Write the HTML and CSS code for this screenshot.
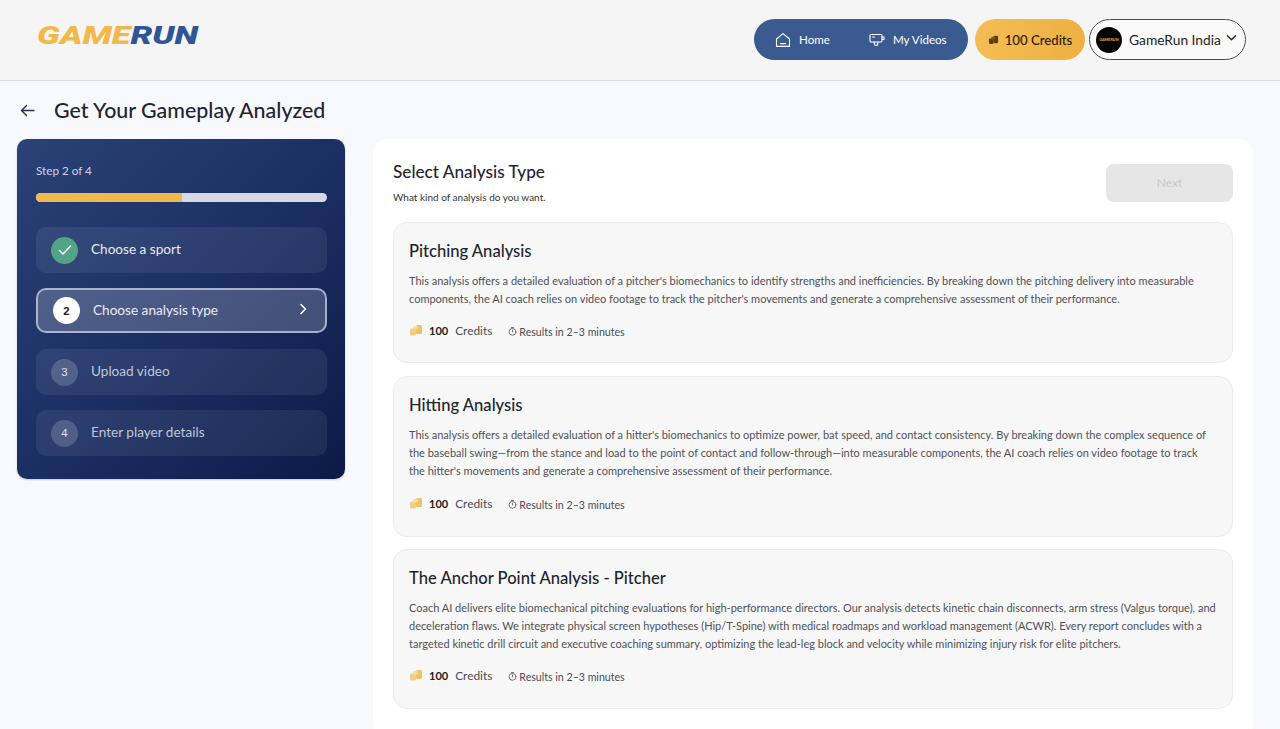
FILE: index.html
```html
<!DOCTYPE html>
<html lang="en">
<head>
<meta charset="utf-8">
<title>GameRun</title>
<link rel="stylesheet" href="styles.css">
</head>
<body>
<header class="topbar">
  <div class="logo"><span class="logo-gold">GAME</span><span class="logo-blue">RUN</span></div>
  <nav class="top-actions">
    <div class="nav-pill">
      <a class="nav-link nav-home">
        <svg class="nav-icon" viewBox="0 0 16 16" fill="none" stroke="#fff" stroke-width="1.1" stroke-linejoin="round" stroke-linecap="round"><path d="M1.5 7 8 1.6 14.5 7v7.4h-13z"/><path d="M5.5 11.6h5"/></svg>
        <span>Home</span>
      </a>
      <a class="nav-link">
        <svg class="nav-icon" viewBox="0 0 16 16" fill="none" stroke="#fff" stroke-width="1.1" stroke-linejoin="round" stroke-linecap="round"><rect x="1" y="2.5" width="12" height="7.5" rx="1.2"/><path d="M13 5h2v2.5h-2M5 10l.8 3.2h2.6L9 10M3.5 5h2"/></svg>
        <span>My Videos</span>
      </a>
    </div>
    <div class="credits-pill">
      <svg class="coin-small" viewBox="0 0 12 12" fill="#5a3d08"><rect x="1" y="5" width="5" height="6" rx="1.4"/><rect x="6" y="2" width="5" height="8" rx="1.4"/><rect x="3.5" y="3" width="4" height="3" rx="1.2" fill="#7c5a14"/></svg>
      <span>100 Credits</span>
    </div>
    <div class="profile-pill">
      <div class="avatar"><span>GAMERUN</span></div>
      <span class="profile-name">GameRun India</span>
      <svg class="chevron" viewBox="0 0 12 8" fill="none" stroke="#222" stroke-width="1.5" stroke-linecap="round" stroke-linejoin="round"><path d="M1.5 1.5 6 6l4.5-4.5"/></svg>
    </div>
  </nav>
</header>

<div class="title-row">
  <svg class="back" viewBox="0 0 16 14" fill="none" stroke="#27304a" stroke-width="1.5" stroke-linecap="round" stroke-linejoin="round"><path d="M15 7H1.5M7 1.5 1.5 7 7 12.5"/></svg>
  <h1>Get Your Gameplay Analyzed</h1>
</div>

<div class="layout">
  <aside class="stepper">
    <div class="step-label">Step 2 of 4</div>
    <div class="progress"><div class="progress-fill"></div></div>
    <ul class="steps">
      <li class="step">
        <span class="badge badge-done"><svg viewBox="0 0 14 12" fill="none" stroke="#fff" stroke-width="1.5" stroke-linecap="round" stroke-linejoin="round"><path d="M1.5 6.5 5 10l7.5-8"/></svg></span>
        <span class="step-text">Choose a sport</span>
      </li>
      <li class="step step-active">
        <span class="badge badge-active">2</span>
        <span class="step-text">Choose analysis type</span>
        <svg class="step-arrow" viewBox="0 0 8 12" fill="none" stroke="#fff" stroke-width="1.6" stroke-linecap="round" stroke-linejoin="round"><path d="M2 1.5 6.5 6 2 10.5"/></svg>
      </li>
      <li class="step">
        <span class="badge">3</span>
        <span class="step-text step-dim">Upload video</span>
      </li>
      <li class="step">
        <span class="badge">4</span>
        <span class="step-text step-dim">Enter player details</span>
      </li>
    </ul>
  </aside>

  <main class="panel">
    <div class="panel-head">
      <div>
        <h2>Select Analysis Type</h2>
        <p class="panel-sub">What kind of analysis do you want.</p>
      </div>
      <button class="next" disabled>Next</button>
    </div>

    <section class="card">
      <h3>Pitching Analysis</h3>
      <p>This analysis offers a detailed evaluation of a pitcher's biomechanics to identify strengths and inefficiencies. By breaking down the pitching delivery into measurable<br>components, the AI coach relies on video footage to track the pitcher's movements and generate a comprehensive assessment of their performance.</p>
      <div class="meta">
        <svg class="coin" viewBox="0 0 14 12"><rect x="1" y="4.5" width="6" height="7" rx="1.5" fill="#f0cf85"/><rect x="7" y="1" width="6" height="9" rx="1.5" fill="#efc263"/><rect x="4" y="2" width="5" height="3.5" rx="1.5" fill="#f6dca0"/></svg>
        <strong>100</strong><span class="meta-credits">Credits</span>
        <span class="meta-time"><svg class="clock" viewBox="0 0 10 10" fill="none" stroke="#555" stroke-width=".9" stroke-linecap="round"><circle cx="5" cy="5.4" r="3.8"/><path d="M5 3.4v2.2M3.8.6h2.4"/></svg>Results in 2–3 minutes</span>
      </div>
    </section>

    <section class="card">
      <h3>Hitting Analysis</h3>
      <p>This analysis offers a detailed evaluation of a hitter's biomechanics to optimize power, bat speed, and contact consistency. By breaking down the complex sequence of<br>the baseball swing—from the stance and load to the point of contact and follow-through—into measurable components, the AI coach relies on video footage to track<br>the hitter's movements and generate a comprehensive assessment of their performance.</p>
      <div class="meta">
        <svg class="coin" viewBox="0 0 14 12"><rect x="1" y="4.5" width="6" height="7" rx="1.5" fill="#f0cf85"/><rect x="7" y="1" width="6" height="9" rx="1.5" fill="#efc263"/><rect x="4" y="2" width="5" height="3.5" rx="1.5" fill="#f6dca0"/></svg>
        <strong>100</strong><span class="meta-credits">Credits</span>
        <span class="meta-time"><svg class="clock" viewBox="0 0 10 10" fill="none" stroke="#555" stroke-width=".9" stroke-linecap="round"><circle cx="5" cy="5.4" r="3.8"/><path d="M5 3.4v2.2M3.8.6h2.4"/></svg>Results in 2–3 minutes</span>
      </div>
    </section>

    <section class="card">
      <h3>The Anchor Point Analysis - Pitcher</h3>
      <p>Coach AI delivers elite biomechanical pitching evaluations for high-performance directors. Our analysis detects kinetic chain disconnects, arm stress (Valgus torque), and<br>deceleration flaws. We integrate physical screen hypotheses (Hip/T-Spine) with medical roadmaps and workload management (ACWR). Every report concludes with a<br>targeted kinetic drill circuit and executive coaching summary, optimizing the lead-leg block and velocity while minimizing injury risk for elite pitchers.</p>
      <div class="meta">
        <svg class="coin" viewBox="0 0 14 12"><rect x="1" y="4.5" width="6" height="7" rx="1.5" fill="#f0cf85"/><rect x="7" y="1" width="6" height="9" rx="1.5" fill="#efc263"/><rect x="4" y="2" width="5" height="3.5" rx="1.5" fill="#f6dca0"/></svg>
        <strong>100</strong><span class="meta-credits">Credits</span>
        <span class="meta-time"><svg class="clock" viewBox="0 0 10 10" fill="none" stroke="#555" stroke-width=".9" stroke-linecap="round"><circle cx="5" cy="5.4" r="3.8"/><path d="M5 3.4v2.2M3.8.6h2.4"/></svg>Results in 2–3 minutes</span>
      </div>
    </section>
  </main>
</div>
</body>
</html>
```
FILE: styles.css
```css
* { box-sizing: border-box; }
html, body { margin: 0; height: 729px; overflow: hidden; }
body {
  background: #f8f9fc;
  font-family: "Lato", "Noto Sans", sans-serif;
  color: #1f2433;
}
.topbar {
  height: 81px;
  background: #f5f5f5;
  border-bottom: 1px solid #dcdcdc;
  display: flex;
  align-items: flex-start;
  justify-content: space-between;
  padding: 19px 34px 0 37px;
}
.logo {
  font-family: "Roboto", sans-serif;
  font-weight: 900;
  font-style: italic;
  font-size: 26px;
  line-height: 33px;
  transform: scaleX(1.325);
  transform-origin: left center;
}
.logo-gold { color: #f2b84c; }
.logo-blue { color: #2e5596; }
.top-actions { display: flex; gap: 5px; align-items: center; }
.nav-pill {
  width: 214px;
  height: 41px;
  background: #3b5a8f;
  border-radius: 21px;
  display: flex;
  align-items: center;
  gap: 39px;
  padding-left: 21px;
  color: #fff;
  font-size: 11.6px;
}
.nav-link { display: flex; align-items: center; gap: 8px; }
.nav-icon { width: 16px; height: 16px; }
.credits-pill {
  width: 110px;
  height: 41px;
  margin-left: 2px;
  border-radius: 21px;
  background: linear-gradient(90deg, #f3bd55, #eeb040);
  display: flex;
  align-items: center;
  justify-content: center;
  gap: 6px;
  font-size: 13.2px;
  font-weight: 500;
  color: #2a1c05;
}
.coin-small { width: 11px; height: 11px; }
.profile-pill {
  width: 157px;
  height: 41px;
  margin-left: -1px;
  border: 1px solid #4a4a4a;
  border-radius: 21px;
  background: #fafafa;
  display: flex;
  align-items: center;
  padding-left: 6px;
  gap: 7px;
  font-size: 13.8px;
  color: #1d1d1f;
}
.avatar {
  width: 26px;
  height: 26px;
  border-radius: 50%;
  background: #050505;
  display: flex;
  align-items: center;
  justify-content: center;
  overflow: hidden;
  flex: none;
}
.avatar span {
  font-size: 4px;
  font-weight: 900;
  font-style: italic;
  color: #d9a83e;
}
.chevron { width: 11px; height: 8px; margin: -4px 0 0 -2px; }
.title-row {
  height: 58px;
  display: flex;
  align-items: center;
  padding: 0 0 0 20px;
  gap: 19px;
}
.back { width: 15px; height: 13px; }
h1 { margin: 0; font-size: 21.4px; line-height: 28px; font-weight: 500; color: #1f2433; }
.layout {
  display: flex;
  align-items: flex-start;
  gap: 28px;
  padding-left: 17px;
}
.stepper {
  width: 328px;
  height: 340px;
  border-radius: 10px;
  background: linear-gradient(135deg, #2a4277 0%, #1c2f64 50%, #0c1a47 100%);
  padding: 23px 18px 0 19px;
  box-shadow: 0 1px 2px rgba(0,0,0,.2);
}
.step-label { font-size: 11.7px; line-height: 16px; color: #cdd4e6; }
.progress {
  height: 9px;
  margin-top: 15px;
  border-radius: 5px;
  background: #d6d9e4;
  overflow: hidden;
}
.progress-fill { width: 50%; height: 100%; background: #f0b94f; }
.steps {
  list-style: none;
  margin: 25px 0 0;
  padding: 0;
  display: flex;
  flex-direction: column;
  gap: 15px;
}
.step {
  height: 46px;
  border-radius: 10px;
  background: rgba(255,255,255,.07);
  display: flex;
  align-items: center;
  padding-left: 15px;
  gap: 13px;
  font-size: 13.6px;
  color: #e8ebf3;
}
.step-text { margin-top: -2px; }
.step-active {
  background: rgba(255,255,255,.2);
  border: 2px solid rgba(205,213,232,.72);
  height: 45px;
  margin-bottom: 1px;
  padding-left: 15px;
  position: relative;
}
.step-active .step-text { margin-top: -1px; }
.step-dim { color: #bfc6d9; }
.badge {
  width: 27px;
  height: 27px;
  border-radius: 50%;
  background: rgba(255,255,255,.18);
  color: #dfe3ee;
  font-size: 11.5px;
  font-family: "Liberation Sans", sans-serif;
  display: flex;
  align-items: center;
  justify-content: center;
  flex: none;
}
.badge-done { background: #52a486; }
.badge-done svg { width: 14px; height: 12px; }
.badge-active { background: #fff; color: #222; font-weight: 600; }
.step-arrow { width: 8px; height: 12px; margin-left: auto; margin-right: 18px; margin-top: -3px; }
.panel {
  width: 880px;
  height: 600px;
  background: #fff;
  border-radius: 14px;
  padding: 21px 20px 0;
}
.panel-head {
  display: flex;
  justify-content: space-between;
  align-items: flex-start;
  height: 62px;
}
h2 { margin: 0; font-size: 17.2px; line-height: 24px; font-weight: 500; color: #222631; }
.panel-sub { margin: 5px 0 0; font-size: 10px; line-height: 16px; color: #333; }
.next {
  width: 127px;
  height: 38px;
  margin-top: 4px;
  border: 0;
  padding: 0 0 2px;
  border-radius: 8px;
  background: #e6e6e6;
  color: #c9c9c9;
  font: inherit;
  font-size: 12px;
}
.card {
  background: #f7f7f7;
  border: 1px solid #ececec;
  border-radius: 14px;
  padding: 16px 15px 0;
  margin-bottom: 13px;
  height: 141px;
}
.card + .card { height: 161px; margin-bottom: 12px; }
.card:last-child { height: 160px; margin-bottom: 0; }
h3 { margin: 0; font-size: 16.6px; line-height: 25px; font-weight: 500; color: #20242f; }
.card p {
  margin: 8px 0 0;
  font-size: 11px;
  line-height: 18px;
  color: #4f5158;
  white-space: nowrap;
}
.meta {
  margin-top: 12px;
  height: 20px;
  display: flex;
  align-items: center;
  font-size: 10.6px;
  color: #4a4c52;
}
.card:nth-of-type(2) .meta { margin-top: 13px; }
.coin { width: 14px; height: 12px; margin-right: 5px; }
.meta strong { font-size: 11px; font-weight: 700; color: #222; margin: 0 7px 0 1px; }
.meta-credits { font-size: 11.9px; }
.meta-time {
  display: flex;
  align-items: center;
  gap: 2px;
  margin-left: 16px;
  margin-top: 3px;
  font-size: 10.6px;
}
.clock { width: 9px; height: 9px; }
```
